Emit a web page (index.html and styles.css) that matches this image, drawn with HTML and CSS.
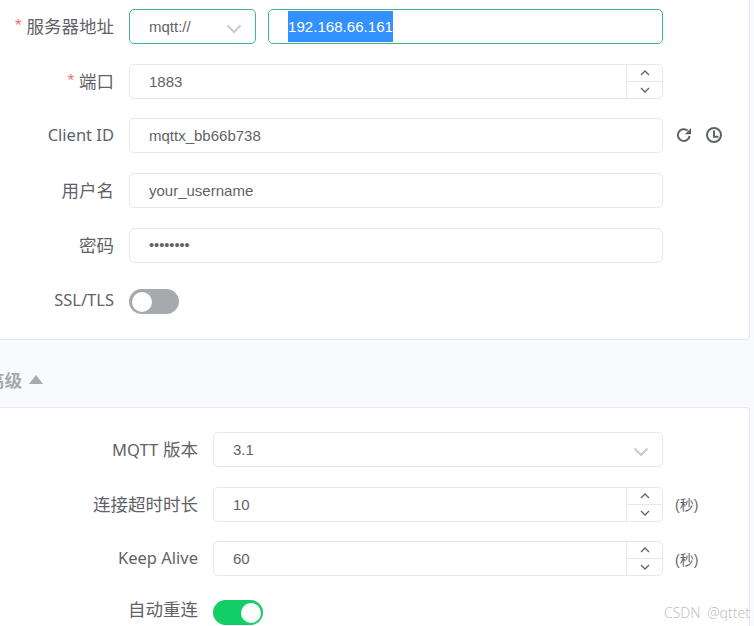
FILE: index.html
```html
<!DOCTYPE html>
<html lang="zh">
<head>
<meta charset="utf-8">
<title>MQTT 连接设置</title>
<link rel="stylesheet" href="styles.css">
</head>
<body>
<div class="page">
  <section class="card card-top">
    <div class="row">
      <label class="label"><span class="req">*</span> 服务器地址</label>
      <div class="field select select-proto focus"><span class="value">mqtt://</span><svg class="chev" viewBox="0 0 16 10"><path d="M1.5 1.5 8 8l6.5-6.5"/></svg></div>
      <div class="field host focus"><span class="selected">192.168.66.161</span></div>
    </div>
    <div class="row">
      <label class="label"><span class="req">*</span> 端口</label>
      <div class="field number"><span class="value">1883</span>
        <div class="steps">
          <div class="step"><svg viewBox="0 0 10 6"><path d="M1 5 5 1l4 4"/></svg></div>
          <div class="step"><svg viewBox="0 0 10 6"><path d="M1 1l4 4 4-4"/></svg></div>
        </div>
      </div>
    </div>
    <div class="row">
      <label class="label"><span class="lat">Client ID</span></label>
      <div class="field"><span class="value">mqttx_bb66b738</span></div>
      <div class="tools">
        <svg class="tool tool-refresh" viewBox="0 0 16 16"><path d="M13.6 9A5.9 5.9 0 1 1 11.6 3.6"/><path class="fill" d="M15 1v6.2H8.8z"/></svg>
        <svg class="tool" viewBox="0 0 16 16"><circle cx="8" cy="8" r="7"/><path d="M8 3.6V9.7h4.4"/></svg>
      </div>
    </div>
    <div class="row">
      <label class="label">用户名</label>
      <div class="field"><span class="value">your_username</span></div>
    </div>
    <div class="row">
      <label class="label">密码</label>
      <div class="field"><span class="value dots">••••••••</span></div>
    </div>
    <div class="row row-switch">
      <label class="label"><span class="lat">SSL/TLS</span></label>
      <div class="switch"><span class="knob"></span></div>
    </div>
  </section>

  <div class="section-title"><span class="section-text">高级</span><svg class="caret" viewBox="0 0 14 9"><path d="M7 0l7 9H0z"/></svg></div>

  <section class="card card-adv">
    <div class="row">
      <label class="label"><span class="lat">MQTT</span> 版本</label>
      <div class="field select"><span class="value">3.1</span><svg class="chev" viewBox="0 0 16 10"><path d="M1.5 1.5 8 8l6.5-6.5"/></svg></div>
    </div>
    <div class="row">
      <label class="label">连接超时时长</label>
      <div class="field number"><span class="value">10</span>
        <div class="steps">
          <div class="step"><svg viewBox="0 0 10 6"><path d="M1 5 5 1l4 4"/></svg></div>
          <div class="step"><svg viewBox="0 0 10 6"><path d="M1 1l4 4 4-4"/></svg></div>
        </div>
      </div>
      <span class="unit">(秒)</span>
    </div>
    <div class="row">
      <label class="label"><span class="lat">Keep Alive</span></label>
      <div class="field number"><span class="value">60</span>
        <div class="steps">
          <div class="step"><svg viewBox="0 0 10 6"><path d="M1 5 5 1l4 4"/></svg></div>
          <div class="step"><svg viewBox="0 0 10 6"><path d="M1 1l4 4 4-4"/></svg></div>
        </div>
      </div>
      <span class="unit">(秒)</span>
    </div>
    <div class="row row-switch">
      <label class="label">自动重连</label>
      <div class="switch on"><span class="knob"></span></div>
    </div>
  </section>
</div>
<div class="watermark">CSDN @qttet</div>
</body>
</html>
```

FILE: styles.css
```css
* { box-sizing: border-box; }
html, body { margin: 0; height: 100%; }
body {
  width: 754px;
  height: 626px;
  overflow: hidden;
  position: relative;
  background: #f9fafd;
  font-family: "Liberation Sans", "Noto Sans CJK SC", sans-serif;
  color: #5f6368;
}
.page { width: 754px; }
.card {
  width: 770px;
  margin-left: -20px;
  background: #fff;
  border: 1px solid #e6e7ef;
  border-radius: 4px;
  display: flex;
  flex-direction: column;
  gap: 19.7px;
}
.card-top { --label: 134px; margin-top: -20px; padding-top: 28px; padding-bottom: 21.5px; }
.card-adv { --label: 218px; padding-top: 24px; padding-bottom: 0; border-bottom: 0; border-radius: 4px 4px 0 0; }
.row { display: flex; align-items: center; height: 35px; flex-shrink: 0; }
.row-switch { align-items: flex-start; padding-top: 7px; }
.card-adv .row-switch { padding-top: 4px; }
.label {
  width: var(--label);
  margin-right: 15px;
  margin-left: -1px;
  padding-bottom: 2px;
  flex-shrink: 0;
  text-align: right;
  font-size: 17.5px;
  white-space: nowrap;
}
.lat { font-family: "Noto Sans", sans-serif; font-size: 16.5px; }
.row-switch .label { line-height: 25px; margin-top: -2px; }
.req { color: #f56c6c; font-size: 17px; margin-right: 0; vertical-align: 2px; line-height: 1; }
.field {
  display: flex;
  align-items: center;
  height: 35px;
  width: 534px;
  padding-left: 19px;
  border: 1px solid #e6e7ef;
  border-radius: 5px;
  font-size: 15px;
  background: #fff;
  flex-shrink: 0;
}
.card-adv .field { width: 450px; }
.value { flex: 1; white-space: nowrap; }
.dots { font-size: 14.5px; }
.focus { border-color: #3eb88a; }
.select-proto { width: 127px; margin-right: 12px; }
.host { width: 395px; padding: 1px 0 1px 19px; align-items: stretch; }
.selected {
  display: flex;
  align-items: center;
  background: #3390ff;
  color: #fff;
  font-size: 15.1px;
}
.chev { width: 16px; height: 10px; margin: 5px 13px 0 0; fill: none; stroke: #c8cbd2; stroke-width: 2; }
.number { padding-right: 0; }
.steps {
  width: 36px;
  height: 33px;
  border-left: 1px solid #e6e7ef;
  display: flex;
  flex-direction: column;
}
.step { flex: 1; display: flex; align-items: center; justify-content: center; }
.step:first-child { border-bottom: 1px solid #e6e7ef; }
.step svg { width: 10px; height: 6px; fill: none; stroke: #5f6368; stroke-width: 1.3; }
.tools { display: flex; gap: 14px; margin: 0 0 2px 13px; align-items: center; }
.tool { width: 16px; height: 16px; fill: none; stroke: #5f6368; stroke-width: 2; }
.tool .fill { fill: #5f6368; stroke: none; }
.unit { margin-left: 12px; font-size: 14px; }
.switch {
  width: 50px;
  height: 25px;
  border-radius: 13px;
  background: #a6a9ae;
  padding: 2.5px;
  display: flex;
  flex-shrink: 0;
}
.switch.on { background: #13ce66; justify-content: flex-end; }
.knob { width: 20px; height: 20px; border-radius: 50%; background: #fff; }
.section-title {
  height: 67px;
  padding-top: 12px;
  display: flex;
  align-items: center;
  gap: 7px;
  margin-left: -13px;
  font-size: 17.5px;
  font-weight: 700;
  color: #a6a9ae;
}
.caret { width: 14px; height: 9px; fill: #a6a9ae; }
.watermark {
  position: absolute;
  right: 4px;
  top: 603px;
  font-family: "Noto Sans", sans-serif;
  font-size: 14px;
  font-weight: 300;
  word-spacing: 3px;
  color: #bfc1c5;
  white-space: nowrap;
}
```
